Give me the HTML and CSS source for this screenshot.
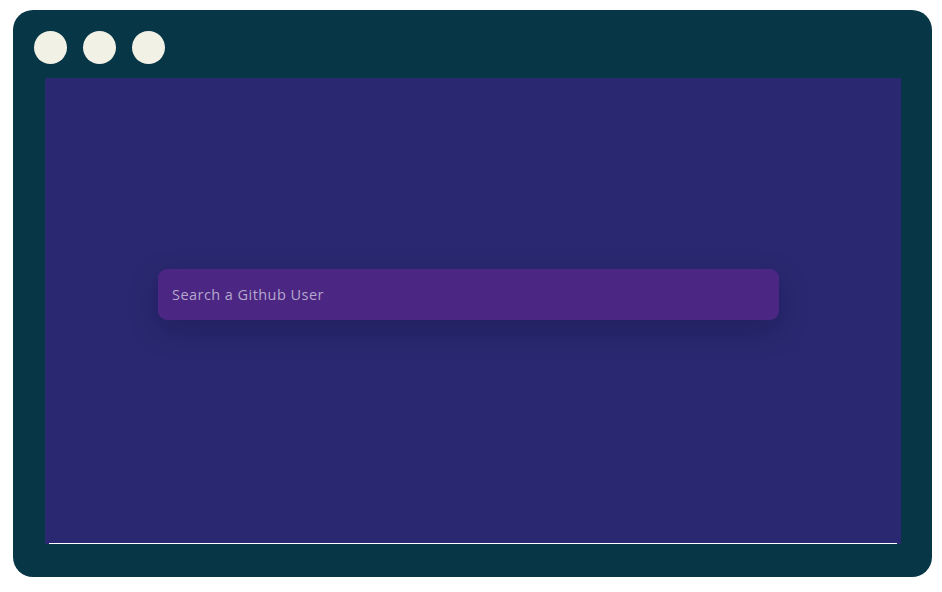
FILE: index.html
```html
<!DOCTYPE html>
<html lang="en">
<head>
<meta charset="utf-8">
<title>Github User Search</title>
<link rel="stylesheet" href="styles.css">
</head>
<body>
<div class="frame">
  <div class="dots">
    <span class="dot"></span>
    <span class="dot"></span>
    <span class="dot"></span>
  </div>
  <div class="screen">
    <div class="content">
      <div class="search">
        <input class="search-input" type="text" placeholder="Search a Github User">
      </div>
    </div>
    <div class="line"></div>
  </div>
</div>
</body>
</html>
```
FILE: styles.css
```css
html, body {
  margin: 0;
  padding: 0;
  background: #ffffff;
}
body {
  padding: 10px 10px 0 13px;
  font-family: "Open Sans", "Liberation Sans", sans-serif;
}
.frame {
  width: 919px;
  height: 567px;
  box-sizing: border-box;
  background: #073747;
  border-radius: 20px;
  padding: 21px 31px 33px 32px;
  display: flex;
  flex-direction: column;
}
.dots {
  display: flex;
  gap: 16px;
  margin-left: -11px;
  height: 33px;
  margin-bottom: 14px;
}
.dot {
  width: 33px;
  height: 33px;
  border-radius: 50%;
  background: #f2f1e6;
}
.screen {
  flex: 1;
  background: #2a2870;
  display: flex;
  flex-direction: column;
}
.content {
  flex: 1;
  padding: 191px 0 0 113px;
}
.search {
  width: 621px;
  height: 51px;
  border-radius: 9px;
  background: #4b2683;
  box-shadow: 0 10px 30px rgba(10, 10, 40, 0.24);
  display: flex;
  align-items: center;
}
.search-input {
  flex: 1;
  border: none;
  outline: none;
  background: transparent;
  padding: 0 14px;
  font-family: "Open Sans", "Liberation Sans", sans-serif;
  font-size: 14.5px;
  letter-spacing: 0.45px;
  color: #b6a8cd;
}
.search-input::placeholder {
  color: #b6a8cd;
  opacity: 1;
}
.line {
  height: 1px;
  background: #ffffff;
  margin: 0 4px;
}
```
